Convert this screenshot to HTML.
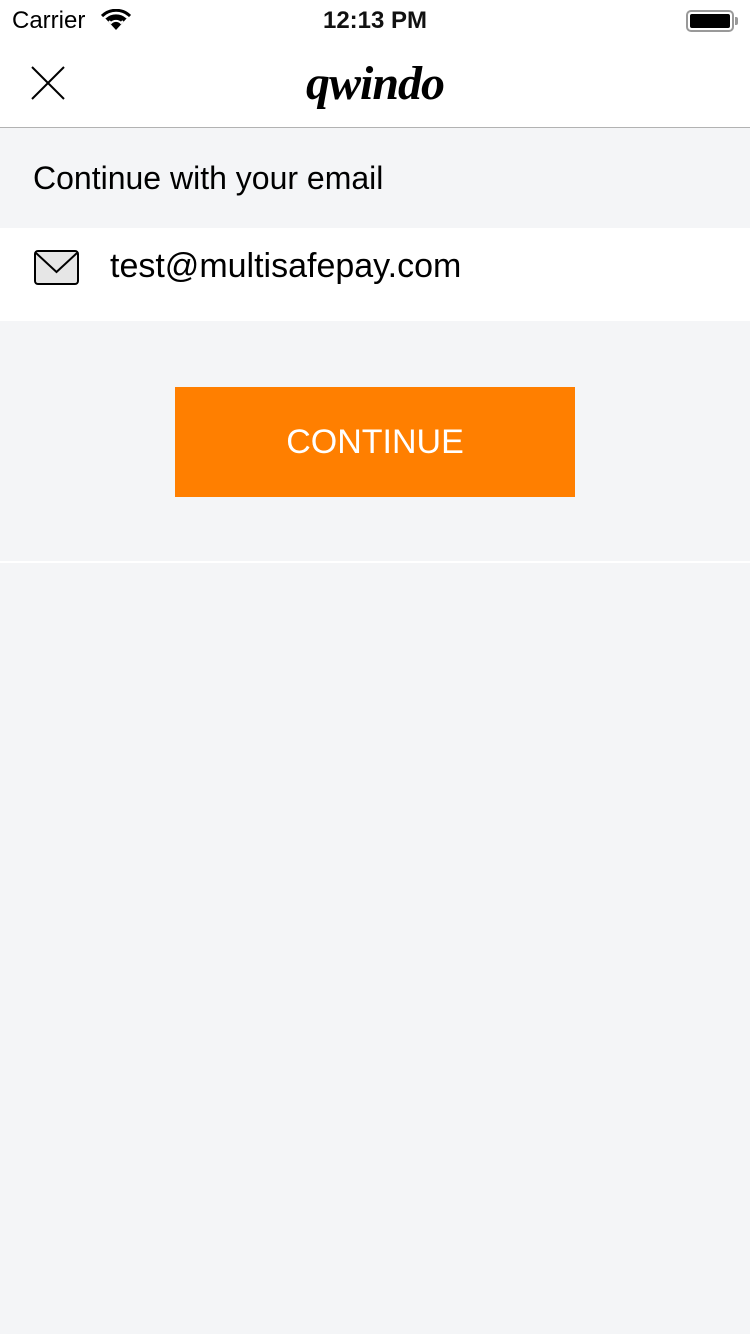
<!DOCTYPE html>
<html><head><meta charset="utf-8"><style>
*{margin:0;padding:0;box-sizing:border-box}
body{width:750px;height:1334px;background:#f4f5f7;font-family:"Liberation Sans",sans-serif;position:relative;overflow:hidden}
.abs{position:absolute}
</style></head><body>
<div class="abs" style="left:0;top:0;width:750px;height:128px;background:#fff;border-bottom:1px solid #b2b2b2"></div>
<div class="abs" style="left:12px;top:7px;font-size:24px;color:#000">Carrier</div>
<svg class="abs" style="left:101px;top:9px" width="30" height="22" viewBox="0 0 30 22"><path d="M15 21 L4 9 A16 16 0 0 1 26 9 Z" fill="#000"/><path d="M1 7 A20 20 0 0 1 29 7" stroke="#000" stroke-width="3" fill="none"/><path d="M8 12 L10 14 A7 7 0 0 1 20 14 L22 12" stroke="#fff" stroke-width="2" fill="none"/><path d="M4 9 A16 16 0 0 1 26 9" stroke="#fff" stroke-width="1.5" fill="none"/></svg>
<div class="abs" style="left:0;width:750px;top:7px;text-align:center;font-size:24px;font-weight:bold;color:#111">12:13 PM</div>
<div class="abs" style="left:686px;top:10px;width:48px;height:22px;border:2px solid #999;border-radius:5px;padding:2px"><div style="width:100%;height:100%;background:#000;border-radius:2px"></div></div>
<div class="abs" style="left:735px;top:17px;width:3px;height:8px;background:#999;border-radius:0 2px 2px 0"></div>
<svg class="abs" style="left:31px;top:66px" width="34" height="34"><path d="M1 1L33 33M33 1L1 33" stroke="#000" stroke-width="2"/></svg>
<div class="abs" style="left:0;width:750px;top:56px;text-align:center;font-family:'Liberation Serif',serif;font-style:italic;font-weight:bold;font-size:48px;letter-spacing:-1px;color:#000">qwindo</div>
<div class="abs" style="left:33px;top:160px;font-size:32px;color:#000">Continue with your email</div>
<div class="abs" style="left:0;top:228px;width:750px;height:93px;background:#fff"></div>
<svg class="abs" style="left:34px;top:250px" width="45" height="35"><rect x="1" y="1" width="43" height="33" rx="3" fill="#e6e6e6" stroke="#000" stroke-width="2"/><path d="M2 3L22.5 22L43 3" fill="none" stroke="#000" stroke-width="2"/></svg>
<div class="abs" style="left:110px;top:247px;font-size:34px;color:#000">test@multisafepay.com</div>
<div class="abs" style="left:175px;top:387px;width:400px;height:110px;background:#ff7f00;color:#fff;font-size:34px;text-align:center;line-height:110px">CONTINUE</div>
<div class="abs" style="left:0;top:561px;width:750px;height:2px;background:#fff"></div>
</body></html>
